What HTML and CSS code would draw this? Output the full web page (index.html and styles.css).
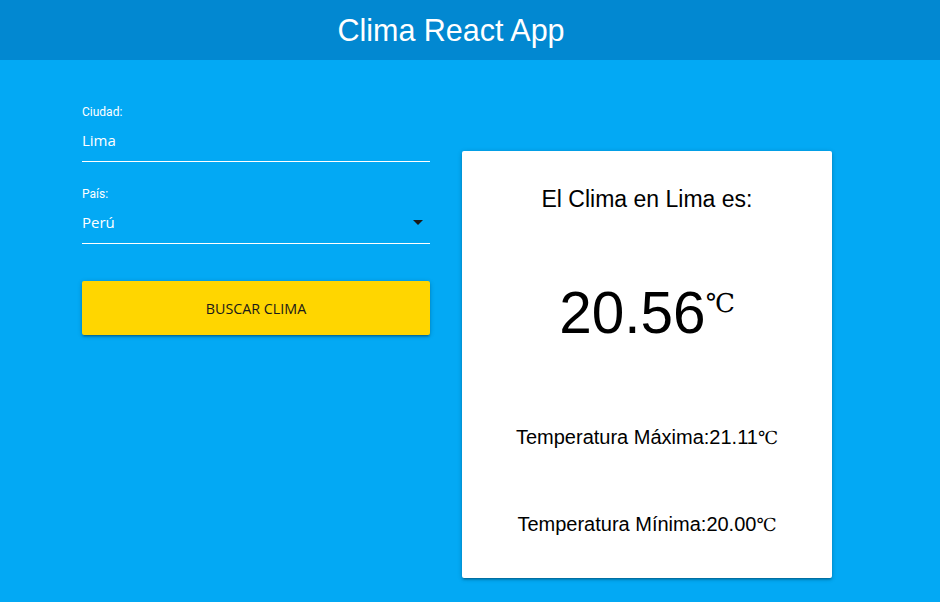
FILE: index.html
```html
<!DOCTYPE html>
<html lang="es">
<head>
<meta charset="utf-8">
<title>Clima React App</title>
<link rel="stylesheet" href="styles.css">
</head>
<body>
<header class="topbar">
  <h1 class="brand">Clima React App</h1>
</header>
<main class="layout">
  <form class="search-form">
    <div class="field">
      <label class="field-label">Ciudad:</label>
      <div class="field-input">Lima</div>
    </div>
    <div class="field field-select">
      <label class="field-label">País:</label>
      <div class="field-input">Perú<span class="caret"></span></div>
    </div>
    <button type="button" class="btn-search">BUSCAR CLIMA</button>
  </form>
  <section class="card">
    <h2 class="card-title">El Clima en Lima es:</h2>
    <p class="temp-now">20.56<span class="unit-big">℃</span></p>
    <p class="temp-line temp-max">Temperatura Máxima:21.11<span class="unit">℃</span></p>
    <p class="temp-line temp-min">Temperatura Mínima:20.00<span class="unit">℃</span></p>
  </section>
</main>
</body>
</html>
```
FILE: styles.css
```css
html, body {
  margin: 0;
  padding: 0;
}
body {
  background: #03a9f4;
  width: 940px;
  height: 602px;
  overflow: hidden;
  font-family: "Liberation Sans", Arial, sans-serif;
}
.topbar {
  background: #0288d1;
  height: 60px;
  display: flex;
  align-items: center;
  justify-content: center;
  padding-right: 38px;
}
.brand {
  margin: 0;
  color: #fff;
  font-family: "Liberation Sans", Arial, sans-serif;
  font-weight: normal;
  font-size: 30.5px;
  line-height: 58px;
}
.layout {
  display: flex;
  align-items: flex-start;
  padding-left: 82px;
  gap: 32px;
}
.search-form {
  width: 348px;
  padding-top: 45px;
  display: flex;
  flex-direction: column;
}
.field-label {
  display: block;
  font-family: Roboto, "Noto Sans", sans-serif;
  font-size: 12px;
  line-height: 14px;
  color: #fff;
}
.field-input {
  position: relative;
  height: 42px;
  line-height: 42px;
  border-bottom: 1px solid #fff;
  color: #fff;
  font-family: "Open Sans", "Noto Sans", sans-serif;
  font-size: 15px;
}
.field-select {
  margin-top: 25px;
}
.caret {
  position: absolute;
  right: 7px;
  top: 19px;
  width: 0;
  height: 0;
  border-left: 5px solid transparent;
  border-right: 5px solid transparent;
  border-top: 5px solid #1a1a1a;
}
.btn-search {
  margin-top: 37px;
  height: 54px;
  border: none;
  border-radius: 2px;
  background: #ffd600;
  color: #1a1a1a;
  font-family: "Open Sans", "Noto Sans", sans-serif;
  font-size: 14.3px;
  box-shadow: 0 2px 2px 0 rgba(0,0,0,0.14), 0 3px 1px -2px rgba(0,0,0,0.12), 0 1px 5px 0 rgba(0,0,0,0.2);
}
.card {
  margin-top: 91px;
  width: 370px;
  height: 427px;
  box-sizing: border-box;
  background: #fff;
  border-radius: 2px;
  box-shadow: 0 2px 2px 0 rgba(0,0,0,0.14), 0 3px 1px -2px rgba(0,0,0,0.12), 0 1px 5px 0 rgba(0,0,0,0.2);
  padding-top: 34px;
  text-align: center;
  color: #000;
}
.card-title {
  margin: 0;
  font-weight: normal;
  font-size: 23px;
  line-height: 28px;
}
.temp-now {
  margin: 65px 0 0;
  font-size: 58.5px;
  line-height: 70px;
}
.unit-big {
  font-family: "DejaVu Serif", "Liberation Serif", serif;
  font-size: 26px;
  vertical-align: top;
  line-height: 50px;
}
.temp-line {
  margin: 0;
  font-size: 20px;
  line-height: 24px;
}
.temp-max {
  margin-top: 77px;
}
.temp-min {
  margin-top: 62px;
}
.unit {
  font-family: "DejaVu Serif", "Liberation Serif", serif;
  font-size: 18px;
}
```
